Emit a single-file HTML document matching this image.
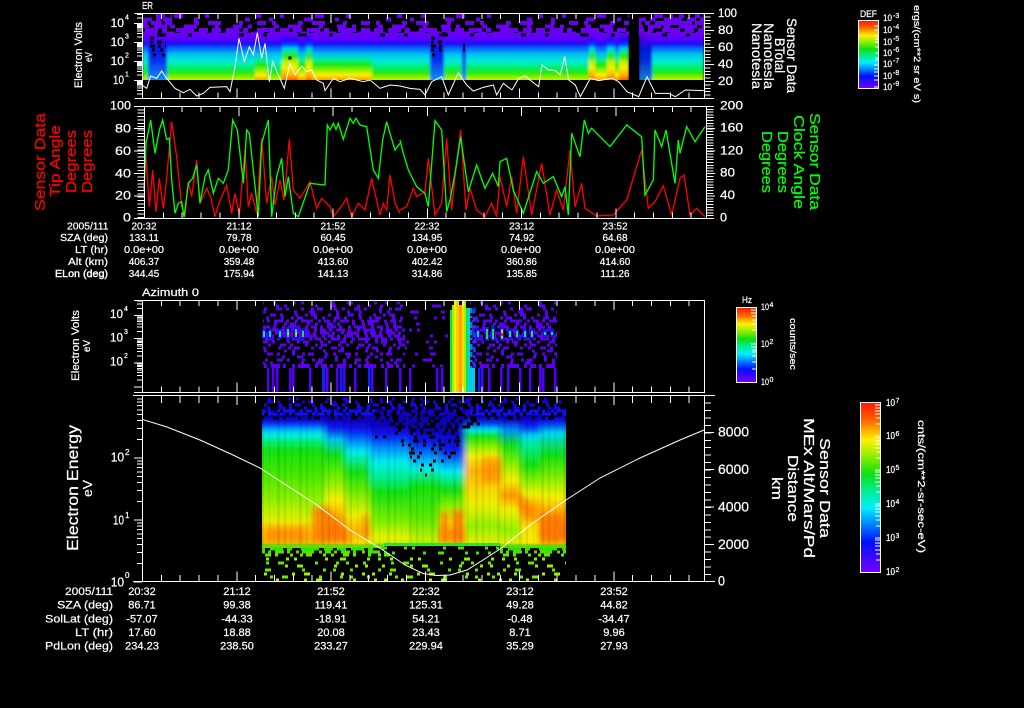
<!DOCTYPE html>
<html><head><meta charset="utf-8"><title>Sensor Data</title>
<style>
html,body{margin:0;padding:0;background:#000}
svg{display:block}
text{fill:#fff;font-family:"Liberation Sans",sans-serif;stroke:#fff;stroke-width:.22}
.s7{font-size:7px}.s9{font-size:9.5px}.s10{font-size:10px}.s11{font-size:11px}.s12{font-size:12px}.s13{font-size:13px}.s14{font-size:14px}.s15{font-size:15px}
.r text,text.r{fill:#f00;stroke:#f00}
.gr text{fill:#0f0;stroke:#0f0}
.m text{text-anchor:middle}
.e text,text.e{text-anchor:end}
.ax{stroke:#fff;fill:none;shape-rendering:crispEdges}
.sp{stroke-dasharray:4 31 9 22 4 47 5 19}
.md{stroke-dasharray:4 14 9 6 4 22 5 9 13 18}
.dn{stroke-dasharray:9 5 13 4 5 9 18 5 9 4}
.vd{stroke-dasharray:22 4 13 5 27 4 9 5}
.f0{stroke-dasharray:3 14 3 25 3 9 6 31 3 18 3 7}
.f1{stroke-dasharray:3 9 3 17 3 5 3 28 3 12 6 21 3 8}
.f2{stroke-dasharray:3 5 3 9 6 4 3 12 3 7 3 3 6 11}
.f3{stroke-dasharray:6 3 3 4 9 3 3 6 3 3 12 5 3 3}
.nz{fill:none;shape-rendering:crispEdges}
</style></head>
<body>
<svg width="1024" height="708" viewBox="0 0 1024 708" xmlns="http://www.w3.org/2000/svg">
<defs>
<filter id="b" x="-5%" y="-5%" width="110%" height="110%"><feGaussianBlur stdDeviation="1.2 .3"/></filter>
<filter id="b2" x="-5%" y="-5%" width="110%" height="110%"><feGaussianBlur stdDeviation="3 1.5"/></filter>
<filter id="b3" x="-30%" y="-30%" width="160%" height="160%"><feGaussianBlur stdDeviation="3"/></filter>
<clipPath id="c1"><rect x="142" y="14" width="562" height="66"/></clipPath>
<clipPath id="c4"><rect x="262" y="396" width="304" height="186"/></clipPath>
<clipPath id="ca"><rect x="130" y="13" width="14" height="86"/></clipPath>
<clipPath id="cc"><rect x="130" y="300" width="14" height="93"/></clipPath>

<linearGradient id="n1" gradientUnits="userSpaceOnUse" x1="0" y1="0" x2="0" y2="1000"><stop offset=".033" stop-color="#6a00ff"/><stop offset=".041" stop-color="#5000ff"/><stop offset=".044" stop-color="#0818f0"/><stop offset=".048" stop-color="#0860ff"/><stop offset=".054" stop-color="#00c0f0"/><stop offset=".062" stop-color="#00eed0"/><stop offset=".068" stop-color="#00ee60"/><stop offset=".073" stop-color="#30e810"/><stop offset=".078" stop-color="#a0f000"/><stop offset=".080" stop-color="#c8f000"/></linearGradient>
<linearGradient id="w1" gradientUnits="userSpaceOnUse" x1="0" y1="0" x2="0" y2="1000"><stop offset=".033" stop-color="#6a00ff"/><stop offset=".041" stop-color="#5000ff"/><stop offset=".044" stop-color="#0818f0"/><stop offset=".048" stop-color="#0860ff"/><stop offset=".054" stop-color="#00c0f0"/><stop offset=".060" stop-color="#00ee90"/><stop offset=".065" stop-color="#20e810"/><stop offset=".070" stop-color="#90f000"/><stop offset=".075" stop-color="#f4f000"/><stop offset=".080" stop-color="#ffa000"/></linearGradient>
<linearGradient id="h1" gradientUnits="userSpaceOnUse" x1="0" y1="0" x2="0" y2="1000"><stop offset=".033" stop-color="#6a00ff"/><stop offset=".040" stop-color="#3000ff"/><stop offset=".044" stop-color="#0040ff"/><stop offset=".048" stop-color="#00c0f0"/><stop offset=".052" stop-color="#00ee90"/><stop offset=".056" stop-color="#30e810"/><stop offset=".062" stop-color="#c0f000"/><stop offset=".068" stop-color="#f4f000"/><stop offset=".075" stop-color="#ffb000"/><stop offset=".080" stop-color="#ff6000"/></linearGradient>
<linearGradient id="d1" gradientUnits="userSpaceOnUse" x1="0" y1="0" x2="0" y2="1000"><stop offset=".033" stop-color="#6a00ff"/><stop offset=".042" stop-color="#4000ff"/><stop offset=".048" stop-color="#0818f0"/><stop offset=".060" stop-color="#0030f0"/><stop offset=".070" stop-color="#1060f0"/><stop offset=".080" stop-color="#1090f0"/></linearGradient>

<linearGradient id="A" gradientUnits="userSpaceOnUse" x1="0" y1="0" x2="0" y2="1000"><stop offset=".418" stop-color="#1000c0"/><stop offset=".423" stop-color="#0818f0"/><stop offset=".428" stop-color="#0090ff"/><stop offset=".434" stop-color="#00eeee"/><stop offset=".440" stop-color="#00ee90"/><stop offset=".450" stop-color="#10e010"/><stop offset=".472" stop-color="#40e800"/><stop offset=".500" stop-color="#90f000"/><stop offset=".520" stop-color="#e0f000"/><stop offset=".528" stop-color="#ffc000"/><stop offset=".540" stop-color="#ffb000"/><stop offset=".546" stop-color="#c0f000"/></linearGradient>
<linearGradient id="B" gradientUnits="userSpaceOnUse" x1="0" y1="0" x2="0" y2="1000"><stop offset=".420" stop-color="#1000c0"/><stop offset=".428" stop-color="#0818f0"/><stop offset=".440" stop-color="#00c8f0"/><stop offset=".455" stop-color="#10e010"/><stop offset=".480" stop-color="#80f000"/><stop offset=".500" stop-color="#f4f000"/><stop offset=".520" stop-color="#ff9800"/><stop offset=".535" stop-color="#ff7000"/><stop offset=".546" stop-color="#f4f000"/></linearGradient>
<linearGradient id="C" gradientUnits="userSpaceOnUse" x1="0" y1="0" x2="0" y2="1000"><stop offset=".420" stop-color="#1000c0"/><stop offset=".430" stop-color="#0818f0"/><stop offset=".442" stop-color="#0090ff"/><stop offset=".452" stop-color="#00eeee"/><stop offset=".472" stop-color="#10e010"/><stop offset=".492" stop-color="#70ec00"/><stop offset=".515" stop-color="#e8f000"/><stop offset=".532" stop-color="#ffb000"/><stop offset=".546" stop-color="#f4f000"/></linearGradient>
<linearGradient id="D" gradientUnits="userSpaceOnUse" x1="0" y1="0" x2="0" y2="1000"><stop offset=".425" stop-color="#1000c0"/><stop offset=".435" stop-color="#0818f0"/><stop offset=".448" stop-color="#0090ff"/><stop offset=".462" stop-color="#00eeee"/><stop offset=".478" stop-color="#00ee90"/><stop offset=".492" stop-color="#10e010"/><stop offset=".522" stop-color="#80f000"/><stop offset=".538" stop-color="#e8f000"/><stop offset=".546" stop-color="#c0f000"/></linearGradient>
<linearGradient id="E" gradientUnits="userSpaceOnUse" x1="0" y1="0" x2="0" y2="1000"><stop offset=".430" stop-color="#1000c0"/><stop offset=".442" stop-color="#0818f0"/><stop offset=".456" stop-color="#0090ff"/><stop offset=".468" stop-color="#00eeee"/><stop offset=".486" stop-color="#10e010"/><stop offset=".520" stop-color="#60ea00"/><stop offset=".540" stop-color="#c0f000"/><stop offset=".546" stop-color="#a0f000"/></linearGradient>
<linearGradient id="F" gradientUnits="userSpaceOnUse" x1="0" y1="0" x2="0" y2="1000"><stop offset=".430" stop-color="#1000c0"/><stop offset=".450" stop-color="#0818f0"/><stop offset=".462" stop-color="#0090ff"/><stop offset=".472" stop-color="#00eeee"/><stop offset=".490" stop-color="#10e010"/><stop offset=".506" stop-color="#90f000"/><stop offset=".522" stop-color="#f4f000"/><stop offset=".534" stop-color="#ff9000"/><stop offset=".546" stop-color="#f4d000"/></linearGradient>
<linearGradient id="G" gradientUnits="userSpaceOnUse" x1="0" y1="0" x2="0" y2="1000"><stop offset=".418" stop-color="#1000c0"/><stop offset=".424" stop-color="#0040f0"/><stop offset=".430" stop-color="#00eeee"/><stop offset=".436" stop-color="#10e010"/><stop offset=".447" stop-color="#90f000"/><stop offset=".456" stop-color="#f4f000"/><stop offset=".470" stop-color="#ffb000"/><stop offset=".490" stop-color="#f8d800"/><stop offset=".506" stop-color="#e8f000"/><stop offset=".526" stop-color="#90f000"/><stop offset=".546" stop-color="#f0f000"/></linearGradient>
<linearGradient id="H" gradientUnits="userSpaceOnUse" x1="0" y1="0" x2="0" y2="1000"><stop offset=".420" stop-color="#1000c0"/><stop offset=".430" stop-color="#0090ff"/><stop offset=".445" stop-color="#10e010"/><stop offset=".465" stop-color="#90f000"/><stop offset=".480" stop-color="#f4f000"/><stop offset=".495" stop-color="#ff9800"/><stop offset=".510" stop-color="#f4f000"/><stop offset=".530" stop-color="#90f000"/><stop offset=".546" stop-color="#f0f000"/></linearGradient>
<linearGradient id="I" gradientUnits="userSpaceOnUse" x1="0" y1="0" x2="0" y2="1000"><stop offset=".418" stop-color="#1000c0"/><stop offset=".426" stop-color="#0818f0"/><stop offset=".436" stop-color="#00d8f0"/><stop offset=".446" stop-color="#00ee90"/><stop offset=".465" stop-color="#10e010"/><stop offset=".482" stop-color="#90f000"/><stop offset=".495" stop-color="#f4f000"/><stop offset=".508" stop-color="#ff9800"/><stop offset=".526" stop-color="#f8e000"/><stop offset=".546" stop-color="#f4f000"/></linearGradient>
<linearGradient id="J" gradientUnits="userSpaceOnUse" x1="0" y1="0" x2="0" y2="1000"><stop offset=".416" stop-color="#1000c0"/><stop offset=".422" stop-color="#0818f0"/><stop offset=".433" stop-color="#00d8f0"/><stop offset=".455" stop-color="#10e010"/><stop offset=".480" stop-color="#90f000"/><stop offset=".497" stop-color="#f4f000"/><stop offset=".515" stop-color="#ff9800"/><stop offset=".535" stop-color="#ff7000"/><stop offset=".546" stop-color="#f4f000"/></linearGradient>

<linearGradient id="cb" x1="0" y1="0" x2="0" y2="1"><stop offset="0" stop-color="#ff1800"/><stop offset=".1" stop-color="#ff6000"/><stop offset=".22" stop-color="#fff000"/><stop offset=".3" stop-color="#a0f000"/><stop offset=".42" stop-color="#10e010"/><stop offset=".52" stop-color="#00ee90"/><stop offset=".62" stop-color="#00eeff"/><stop offset=".72" stop-color="#0080ff"/><stop offset=".82" stop-color="#0010ff"/><stop offset="1" stop-color="#7800ff"/></linearGradient>

<path id="ld" vector-effect="non-scaling-stroke" d="M134 0H142M137 -30.1H142M137 -47.7H142M137 -60.2H142M137 -69.9H142M137 -77.8H142M137 -84.5H142M137 -90.3H142M137 -95.4H142"/>
</defs>

<rect width="1024" height="708" fill="#000"/>

<!-- PANEL 1 spectrogram -->
<g clip-path="url(#c1)">
<g filter="url(#b)">
<rect x="142" y="33" width="6" height="47" fill="url(#n1)"/>
<rect x="148" y="33" width="19" height="47" fill="url(#d1)"/>
<rect x="167" y="33" width="66" height="47" fill="url(#n1)"/>
<rect x="233" y="33" width="22" height="47" fill="url(#n1)"/>
<rect x="255" y="33" width="4" height="47" fill="url(#w1)"/>
<rect x="259" y="33" width="8" height="47" fill="url(#w1)"/>
<rect x="267" y="33" width="15" height="47" fill="url(#n1)"/>
<rect x="282" y="33" width="16" height="47" fill="url(#h1)"/>
<rect x="298" y="33" width="8" height="47" fill="url(#w1)"/>
<rect x="306" y="33" width="6" height="47" fill="url(#h1)"/>
<rect x="312" y="33" width="60" height="47" fill="url(#w1)"/>
<rect x="372" y="33" width="58" height="47" fill="url(#n1)"/>
<rect x="430" y="33" width="14" height="47" fill="url(#d1)"/>
<rect x="444" y="33" width="18" height="47" fill="url(#n1)"/>
<rect x="462" y="33" width="4" height="47" fill="url(#d1)"/>
<rect x="466" y="33" width="123" height="47" fill="url(#n1)"/>
<rect x="589" y="33" width="6" height="47" fill="url(#h1)"/>
<rect x="595" y="33" width="12" height="47" fill="url(#w1)"/>
<rect x="607" y="33" width="8" height="47" fill="url(#h1)"/>
<rect x="615" y="33" width="4" height="47" fill="url(#w1)"/>
<rect x="619" y="33" width="10" height="47" fill="url(#h1)"/>
<rect x="639" y="33" width="13" height="47" fill="url(#d1)" opacity=".9"/>
<rect x="652" y="33" width="52" height="47" fill="url(#n1)"/>
</g>
<g class="nz" stroke="#6a00f0" stroke-width="3.6">
<path class="sp" d="M142 16H704" stroke-dashoffset="3"/>
<path class="sp" d="M142 19.5H704" stroke-dashoffset="14"/>
<path class="md" d="M142 23H704" stroke-dashoffset="7"/>
<path class="md" d="M142 26.5H704" stroke-dashoffset="31"/>
<path class="dn" d="M142 30H704" stroke-dashoffset="11"/>
<path class="vd" d="M142 33.5H704" stroke-dashoffset="6"/>
<path class="md" d="M142 16H172M640 16H704" stroke-dashoffset="4"/>
<path class="dn" d="M142 19.5H172M636 19.5H704" stroke-dashoffset="17"/>
<path class="dn" d="M142 23H172M636 23H704" stroke-dashoffset="22"/>
<path class="dn" d="M142 26.5H172M636 26.5H704" stroke-dashoffset="2"/>
</g>
<g class="nz" stroke="#000" stroke-width="3.4">
<path class="sp" d="M142 35H704" stroke-dashoffset="20"/>
<path class="sp" d="M150 38H166M431 38H442" stroke-dasharray="4 3 3 4"/>
<path d="M150 42H166M431 42H442" stroke-dasharray="3 4 5 3"/>
<path d="M150 46H166M431 46H442M463 46H465" stroke-dasharray="5 3 3 4"/>
<path d="M152 50H166M431 50H442M463 50H465" stroke-dasharray="3 5 3 3"/>
<path d="M153 55H165M432 55H440" stroke-dasharray="3 6 3 3"/>
</g>
<rect x="288.5" y="56.5" width="3" height="3" fill="#000"/>
<rect x="629" y="14" width="10" height="67" fill="#000"/>
</g>

<!-- PANEL 1 line -->
<polyline transform="scale(.33333)" fill="none" stroke="#fff" stroke-width="3" points="426,255 440,265 452,228 470,235 485,213 500,235 525,265 550,278 570,268 590,288 610,280 630,262 680,260 690,275 705,200 717,115 733,185 748,140 760,165 772,98 785,175 795,130 808,245 818,185 835,225 853,265 870,190 885,225 905,198 920,215 935,210 950,240 970,250 975,272 1000,235 1020,245 1050,235 1090,245 1110,240 1140,265 1170,255 1200,258 1230,265 1260,268 1275,285 1295,245 1325,230 1345,285 1375,218 1400,255 1420,273 1450,262 1480,255 1490,285 1510,250 1536,270"/>
<polyline transform="translate(512,0) scale(.33333)" fill="none" stroke="#fff" stroke-width="3" points="0,270 20,235 40,228 60,245 80,260 90,195 110,210 130,212 145,225 158,170 170,240 190,255 205,290 235,235 260,242 300,235 320,245 345,275 380,290 405,230 430,280 470,280 490,290 520,270 575,272"/>

<!-- PANEL 1 axes -->
<g class="ax" stroke-width="1">
<path d="M134.5 13.5H714M134.5 98.5H714M142.5 13V99M704.5 13V99"/>
<path d="M142 16H705" stroke-width="6" stroke-dasharray="1 17.85"/>
<path d="M142 95.5H705" stroke-width="6" stroke-dasharray="1 17.85"/>
<path d="M142 18H705" stroke-width="10" stroke-dasharray="1 93.25"/>
<path d="M142 93.5H705" stroke-width="10" stroke-dasharray="1 93.25"/>
<g clip-path="url(#ca)">
<use href="#ld" transform="translate(0,80.5) scale(1,.19)"/>
<use href="#ld" transform="translate(0,61.5) scale(1,.19)"/>
<use href="#ld" transform="translate(0,42.5) scale(1,.19)"/>
<use href="#ld" transform="translate(0,23.5) scale(1,.19)"/>
<use href="#ld" transform="translate(0,99.5) scale(1,.19)"/>
</g>
<path d="M707.5 13V98" stroke-width="6" stroke-dasharray="1 2.4"/>
<path d="M704 30.5H714M704 47.5H714M704 64.5H714M704 81.5H714"/>
</g>
<text x="142" y="9" class="s10" textLength="11" lengthAdjust="spacingAndGlyphs">ER</text>
<g class="s12">
<text x="110.500" y="27" textLength="13.500" lengthAdjust="spacingAndGlyphs">10</text><text x="125" y="19.500" class="s7">4</text>
<text x="110.500" y="46" textLength="13.500" lengthAdjust="spacingAndGlyphs">10</text><text x="125" y="38.500" class="s7">3</text>
<text x="110.500" y="65" textLength="13.500" lengthAdjust="spacingAndGlyphs">10</text><text x="125" y="57.500" class="s7">2</text>
<text x="113" y="84" textLength="11" lengthAdjust="spacingAndGlyphs">10</text><text x="125" y="76.500" class="s7">1</text>
<text x="718" y="17" textLength="19" lengthAdjust="spacingAndGlyphs">100</text>
<text x="718" y="34" textLength="15" lengthAdjust="spacingAndGlyphs">80</text>
<text x="718" y="51" textLength="15" lengthAdjust="spacingAndGlyphs">60</text>
<text x="718" y="68" textLength="15" lengthAdjust="spacingAndGlyphs">40</text>
<text x="718" y="85" textLength="15" lengthAdjust="spacingAndGlyphs">20</text>
</g>
<text transform="translate(82,88) rotate(-90)" class="s11" textLength="66" lengthAdjust="spacingAndGlyphs">Electron Volts</text>
<text transform="translate(92,62) rotate(-90)" class="s10" textLength="10" lengthAdjust="spacingAndGlyphs">eV</text>
<text transform="translate(787,18) rotate(90)" class="s14" textLength="75" lengthAdjust="spacingAndGlyphs">Sensor Data</text>
<text transform="translate(775,38) rotate(90)" class="s14" textLength="35" lengthAdjust="spacingAndGlyphs">BTotal</text>
<text transform="translate(764,23) rotate(90)" class="s14" textLength="66" lengthAdjust="spacingAndGlyphs">Nanotesla</text>
<text transform="translate(752,23) rotate(90)" class="s14" textLength="66" lengthAdjust="spacingAndGlyphs">Nanotesla</text>

<!-- Colorbar top -->
<rect x="858.500" y="20.500" width="20" height="68" fill="url(#cb)" stroke="#fff"/>
<path class="ax" d="M874 26H878M874 30H878M875 42H878M875 53H878M875 42.500H878M875 47H878M874 65H878M874 69H878M874 72H878M874 76H878M874 80H878M874 87H878M875 36H878M875 39H878M875 58H878M875 60H878" stroke-width="1"/>
<text x="860" y="17" class="s9" textLength="17" lengthAdjust="spacingAndGlyphs">DEF</text>
<g class="s9">
<text x="883" y="21" textLength="9" lengthAdjust="spacingAndGlyphs">10</text><text x="893" y="18" class="s7">-3</text>
<text x="883" y="33" textLength="9" lengthAdjust="spacingAndGlyphs">10</text><text x="893" y="29" class="s7">-4</text>
<text x="883" y="45" textLength="9" lengthAdjust="spacingAndGlyphs">10</text><text x="893" y="41" class="s7">-5</text>
<text x="883" y="56" textLength="9" lengthAdjust="spacingAndGlyphs">10</text><text x="893" y="52" class="s7">-6</text>
<text x="883" y="67" textLength="9" lengthAdjust="spacingAndGlyphs">10</text><text x="893" y="63" class="s7">-7</text>
<text x="883" y="79" textLength="9" lengthAdjust="spacingAndGlyphs">10</text><text x="893" y="75" class="s7">-8</text>
<text x="883" y="90" textLength="9" lengthAdjust="spacingAndGlyphs">10</text><text x="893" y="86" class="s7">-9</text>
</g>
<text transform="translate(914,5) rotate(90)" class="s9" textLength="98" lengthAdjust="spacingAndGlyphs">ergs/(cm**2 sr eV s)</text>

<!-- PANEL 2 -->
<polyline transform="translate(0,100) scale(.33333)" fill="none" stroke="#f00" stroke-width="4" points="432,90 448,320 458,210 468,335 478,235 490,325 500,235 515,65 530,170 545,320 555,350 565,245 575,290 590,180 600,310 620,265 632,290 645,350 655,315 680,255 695,340 705,280 718,345 735,150 745,320 755,280 770,340 785,115 800,310 815,230 825,315 840,240 852,300 868,118 880,270 900,295 930,245 950,325 965,295 990,320 1000,350 1020,325 1040,295 1055,350 1075,310 1095,330 1115,235 1130,300 1140,345 1150,310 1160,330 1170,225 1185,310 1200,340"/>
<polyline transform="translate(400,100) scale(.33333)" fill="none" stroke="#f00" stroke-width="4" points="0,330 20,320 40,265 50,290 75,275 85,175 105,345 125,310 140,115 155,330 165,230 182,90 198,330 210,265 230,330 255,350 275,310 290,350 300,230 320,320 335,230 350,340 370,170 395,345 425,190 450,345 470,270 490,330 510,150 525,320 545,250 555,325 590,348 640,345 680,300 725,150 745,325 765,305 790,258 815,345 840,235 852,225 870,345 890,325 915,350"/>
<polyline transform="translate(0,100) scale(.33333)" fill="none" stroke="#0f0" stroke-width="4" points="432,270 438,130 452,60 465,160 478,90 488,60 500,118 508,115 515,240 525,340 535,310 545,305 552,352 565,250 578,235 590,195 600,310 615,230 625,210 640,280 655,235 670,250 685,210 698,60 712,90 730,250 740,90 748,100 775,350 785,130 805,60 815,350 830,230 845,175 855,290 865,230 880,340 895,350 930,250 975,255 982,75 990,90 1000,70 1008,88 1015,70 1030,118 1050,55 1060,70 1068,55 1080,75 1100,80 1120,210 1135,235 1148,120 1160,65 1170,100 1185,150 1200,130"/>
<polyline transform="translate(400,100) scale(.33333)" fill="none" stroke="#0f0" stroke-width="4" points="0,120 10,160 25,210 50,260 75,280 85,320 105,62 125,90 140,335 150,300 165,220 182,110 205,275 230,195 255,265 278,220 295,260 300,185 320,175 340,270 370,340 410,215 430,250 460,230 485,290 495,260 505,345 515,100 540,170 553,60 565,100 575,85 630,140 680,75 725,110 735,285 760,240 765,90 785,140 798,90 825,250 835,120 840,160 860,80 885,125 915,80"/>
<g class="ax" stroke-width="1">
<path d="M134 106.500H714M134 218.500H714M144.500 106V219M706.500 106V219"/>
<path d="M144 109H707" stroke-width="6" stroke-dasharray="1 17.85"/>
<path d="M144 215.500H707" stroke-width="6" stroke-dasharray="1 17.85"/>
<path d="M144 111H707" stroke-width="10" stroke-dasharray="1 93.25"/>
<path d="M144 213.500H707" stroke-width="10" stroke-dasharray="1 93.25"/>
<path d="M141 106V219" stroke-width="7" stroke-dasharray="1 2.36"/>
<path d="M710 106V219" stroke-width="7" stroke-dasharray="1 1.8"/>
<path d="M134 128.500H144M134 151H144M134 173.500H144M134 196H144"/>
<path d="M707 128.500H715M707 151H715M707 173.500H715M707 196H715"/>
</g>
<g class="s12">
<text x="110" y="109.500" textLength="21" lengthAdjust="spacingAndGlyphs">100</text>
<text x="115" y="132.500" textLength="16" lengthAdjust="spacingAndGlyphs">80</text>
<text x="115" y="155" textLength="16" lengthAdjust="spacingAndGlyphs">60</text>
<text x="115" y="177.500" textLength="16" lengthAdjust="spacingAndGlyphs">40</text>
<text x="115" y="199.500" textLength="16" lengthAdjust="spacingAndGlyphs">20</text>
<text x="123" y="221.500" textLength="8" lengthAdjust="spacingAndGlyphs">0</text>
<text x="720" y="109.500" textLength="23" lengthAdjust="spacingAndGlyphs">200</text>
<text x="720" y="131.700" textLength="23" lengthAdjust="spacingAndGlyphs">160</text>
<text x="720" y="154.300" textLength="23" lengthAdjust="spacingAndGlyphs">120</text>
<text x="720" y="176.700" textLength="15" lengthAdjust="spacingAndGlyphs">80</text>
<text x="720" y="199" textLength="15" lengthAdjust="spacingAndGlyphs">40</text>
<text x="720" y="221.500" textLength="7" lengthAdjust="spacingAndGlyphs">0</text>
</g>
<g class="r s15">
<text transform="translate(45,211) rotate(-90)" textLength="98" lengthAdjust="spacingAndGlyphs">Sensor Data</text>
<text transform="translate(60,197) rotate(-90)" textLength="72" lengthAdjust="spacingAndGlyphs">Tip Angle</text>
<text transform="translate(76,193) rotate(-90)" textLength="63" lengthAdjust="spacingAndGlyphs">Degrees</text>
<text transform="translate(92,193) rotate(-90)" textLength="63" lengthAdjust="spacingAndGlyphs">Degrees</text>
</g>
<g class="gr s15">
<text transform="translate(810,113) rotate(90)" textLength="97" lengthAdjust="spacingAndGlyphs">Sensor Data</text>
<text transform="translate(794,115) rotate(90)" textLength="94" lengthAdjust="spacingAndGlyphs">Clock Angle</text>
<text transform="translate(778,131) rotate(90)" textLength="62" lengthAdjust="spacingAndGlyphs">Degrees</text>
<text transform="translate(762,131) rotate(90)" textLength="62" lengthAdjust="spacingAndGlyphs">Degrees</text>
</g>
<!-- rows under panel 2 -->
<g class="s10">
<text x="67" y="229.300" textLength="41.500" lengthAdjust="spacingAndGlyphs">2005/111</text>
<text x="60" y="241" textLength="48" lengthAdjust="spacingAndGlyphs">SZA (deg)</text>
<text x="75" y="253" textLength="33" lengthAdjust="spacingAndGlyphs">LT (hr)</text>
<text x="68" y="265" textLength="40" lengthAdjust="spacingAndGlyphs">Alt (km)</text>
<text x="55" y="277" textLength="53" lengthAdjust="spacingAndGlyphs" style="stroke-width:.4">ELon (deg)</text>
</g>
<g class="s10 m">
<text x="144" y="229.300">20:32</text><text x="239" y="229.300">21:12</text><text x="333" y="229.300">21:52</text><text x="427" y="229.300">22:32</text><text x="521.700" y="229.300">23:12</text><text x="615" y="229.300">23:52</text>
<text x="144" y="241">133.11</text><text x="239" y="241">79.78</text><text x="333" y="241">60.45</text><text x="427" y="241">134.95</text><text x="521.700" y="241">74.92</text><text x="615" y="241">64.68</text>
<text x="144" y="265">406.37</text><text x="239" y="265">359.48</text><text x="333" y="265">413.60</text><text x="427" y="265">402.42</text><text x="521.700" y="265">360.86</text><text x="615" y="265">414.60</text>
<text x="144" y="277">344.45</text><text x="239" y="277">175.94</text><text x="333" y="277">141.13</text><text x="427" y="277">314.86</text><text x="521.700" y="277">135.85</text><text x="615" y="277">111.26</text>
</g>
<g class="s10">
<text x="124" y="253" textLength="40" lengthAdjust="spacingAndGlyphs">0.0e+00</text><text x="219" y="253" textLength="40" lengthAdjust="spacingAndGlyphs">0.0e+00</text><text x="313" y="253" textLength="40" lengthAdjust="spacingAndGlyphs">0.0e+00</text><text x="407" y="253" textLength="40" lengthAdjust="spacingAndGlyphs">0.0e+00</text><text x="501" y="253" textLength="40" lengthAdjust="spacingAndGlyphs">0.0e+00</text><text x="595" y="253" textLength="40" lengthAdjust="spacingAndGlyphs">0.0e+00</text>
</g>

<!-- PANEL 3 -->
<text x="142" y="296" class="s11" textLength="57" lengthAdjust="spacingAndGlyphs">Azimuth 0</text>
<g class="nz" stroke="#5a00f0" stroke-width="3">
<path class="f1" d="M263 303H405M470 303H557" stroke-dashoffset="2"/>
<path class="f1" d="M263 306H405M472 306H557" stroke-dashoffset="19"/>
<path class="f2" d="M263 309H405M472 309H557" stroke-dashoffset="7"/>
<path class="f1" d="M263 312H405M472 312H557" stroke-dashoffset="40"/>
<path class="f2" d="M263 315H405M472 315H557" stroke-dashoffset="13"/>
<path class="f2" d="M263 318H405M472 318H557" stroke-dashoffset="27"/>
<path class="f3" d="M263 321H405M472 321H557" stroke-dashoffset="5"/>
<path class="f2" d="M263 324H405M472 324H557" stroke-dashoffset="34"/>
<path class="f3" d="M263 327H405M472 327H557" stroke-dashoffset="18"/>
<path class="f3" d="M263 330H405M472 330H557" stroke-dashoffset="9"/>
<path class="f3" d="M263 333H405M472 333H557" stroke-dashoffset="25"/>
<path class="f3" d="M263 336H405M472 336H557" stroke-dashoffset="1"/>
<path class="f3" d="M263 339H405M472 339H557" stroke-dashoffset="14"/>
<path class="f2" d="M263 342H405M472 342H557" stroke-dashoffset="21"/>
<path class="f2" d="M263 345H405M472 345H557" stroke-dashoffset="3"/>
<path class="f2" d="M263 348H405M472 348H557" stroke-dashoffset="30"/>
<path class="f1" d="M263 351H405M472 351H557" stroke-dashoffset="11"/>
<path class="f2" d="M263 354H405M472 354H557" stroke-dashoffset="16"/>
<path class="f1" d="M263 357H405M472 357H557" stroke-dashoffset="52"/>
<path class="f2" d="M263 360H405M472 360H557" stroke-dashoffset="6"/>
<path class="f1" d="M263 363H405M472 363H557" stroke-dashoffset="33"/>
<path class="f3" d="M263 366H405M472 366H557" stroke-dashoffset="8" stroke-width="4"/>
<path class="sp" d="M405 306H448" stroke-dashoffset="8"/>
<path class="sp" d="M405 312H448" stroke-dashoffset="30"/>
<path class="f1" d="M405 318H448" stroke-dashoffset="3"/>
<path class="sp" d="M405 324H448" stroke-dashoffset="55"/>
<path class="f1" d="M405 330H448" stroke-dashoffset="28"/>
<path class="f1" d="M405 336H448" stroke-dashoffset="46"/>
<path class="f1" d="M405 342H448" stroke-dashoffset="11"/>
<path class="sp" d="M405 348H448" stroke-dashoffset="42"/>
<path class="f1" d="M405 354H448" stroke-dashoffset="61"/>
<path class="sp" d="M405 360H448" stroke-dashoffset="17"/>
<path class="f1" d="M405 366H448" stroke-dashoffset="5"/>
</g>
<g stroke="#5000f8" fill="none" shape-rendering="crispEdges" stroke-width="2.500">
<path d="M268 368V392M273 368V392M277 368V392M290 368V392M293 368V392M310 368V392M324 368V392M327 368V392M337 368V392M341 368V392M344 368V392M355 368V392M369 368V392M372 368V392M386 368V392M400 368V392M410 368V392M437 368V392M442 368V392M479 368V392M482 368V392M489 368V392M501 368V392M508 368V392M520 368V392M530 368V392M540 368V392M543 368V392M555 368V392"/>
<path stroke="#0028ff" d="M323 368V392M341 368V392M369 368V392M479 368V392"/>
</g>
<!-- spots -->
<g shape-rendering="crispEdges">
<path fill="none" stroke="#2010f0" stroke-width="4" d="M264 329V339M270 329V339M280 329V339M288 327V339M296 327V339M303 329V339M478 329V339M487 327V341M493 327V341M502 327V341M510 329V339M517 329V339M525 329V339M532 329V339M545 329V337M552 329V337"/>
<path fill="none" stroke="#00e0c0" stroke-width="2" d="M264 331V337M270 331V337M280 331V337M288 329V337M296 329V337M303 331V337M478 331V337M487 329V339M493 329V339M502 329V339M510 331V337M517 331V337M525 331V337M532 331V337M545 332V335M552 332V335"/>
<path fill="none" stroke="#20e020" stroke-width="2" d="M288 331V336M296 331V336M303 332V336M487 331V337M493 331V337M510 332V335M517 332V335"/>
<path fill="none" stroke="#f0d000" stroke-width="1.500" d="M288 332V335M296 332V335M502 330V338"/>
<rect x="501" y="333" width="2" height="3" fill="#ff2000"/>
<!-- hot column -->
<rect x="450" y="310" width="2" height="82" fill="#10e040"/>
<rect x="452" y="305" width="2" height="87" fill="#a0f000"/>
<rect x="454" y="301" width="2" height="91" fill="#f0f000"/>
<rect x="456" y="301" width="3" height="91" fill="#ffc800"/>
<rect x="459" y="305" width="3" height="87" fill="#ffa000"/>
<rect x="462" y="301" width="2" height="91" fill="#f0e000"/>
<rect x="464" y="301" width="2" height="91" fill="#a0f000"/>
<rect x="466" y="308" width="1.500" height="84" fill="#10e040"/>
<rect x="467.500" y="308" width="2.500" height="84" fill="#00d8e0"/>
<rect x="470" y="368" width="5" height="24" fill="#00c8f0"/>
<path fill="none" stroke="#0080f0" stroke-width="2.500" stroke-dasharray="5 3 2 4 6 2" d="M471 308V368"/>
<path fill="none" stroke="#0048ff" stroke-width="2.500" stroke-dasharray="3 4 5 3" d="M474 310V366"/>
</g>
<g class="ax" stroke-width="1">
<path d="M134 300.500H705M134 392.500H705M142.500 300V393M704.500 300V393"/>
<path d="M142 303H705" stroke-width="6" stroke-dasharray="1 17.85"/>
<path d="M142 389.500H705" stroke-width="6" stroke-dasharray="1 17.85"/>
<path d="M142 305H705" stroke-width="10" stroke-dasharray="1 93.25"/>
<path d="M142 387.500H705" stroke-width="10" stroke-dasharray="1 93.25"/>
<g clip-path="url(#cc)">
<use href="#ld" transform="translate(0,315.500) scale(1,.24)"/>
<use href="#ld" transform="translate(0,338.500) scale(1,.24)"/>
<use href="#ld" transform="translate(0,363) scale(1,.24)"/>
<use href="#ld" transform="translate(0,387) scale(1,.24)"/>
</g>
</g>
<g class="s12">
<text x="110" y="318" textLength="13" lengthAdjust="spacingAndGlyphs">10</text><text x="124" y="311" class="s7">4</text>
<text x="110" y="341.700" textLength="13" lengthAdjust="spacingAndGlyphs">10</text><text x="124" y="334" class="s7">3</text>
<text x="110" y="365.700" textLength="13" lengthAdjust="spacingAndGlyphs">10</text><text x="124" y="358" class="s7">2</text>
</g>
<text transform="translate(79,381) rotate(-90)" class="s11" textLength="71" lengthAdjust="spacingAndGlyphs">Electron Volts</text>
<text transform="translate(90,352) rotate(-90)" class="s10" textLength="12" lengthAdjust="spacingAndGlyphs">eV</text>

<!-- Hz bar -->
<rect x="736.500" y="307.500" width="20" height="75" fill="url(#cb)" stroke="#fff"/>
<path class="ax" d="M751 310H756M751 313H756M752 316H756M752 320H756M752 324H756M752 330H756M751 344H756M751 347H756M752 350H756M752 352H756M752 356H756M752 362H756M752 369H756" stroke-width="1"/>
<text x="742" y="303" class="s9" textLength="10" lengthAdjust="spacingAndGlyphs">Hz</text>
<g class="s9">
<text x="761" y="310" textLength="8" lengthAdjust="spacingAndGlyphs">10</text><text x="769.500" y="307" class="s7">4</text>
<text x="761" y="347" textLength="8" lengthAdjust="spacingAndGlyphs">10</text><text x="769.500" y="344" class="s7">2</text>
<text x="761" y="385" textLength="8" lengthAdjust="spacingAndGlyphs">10</text><text x="769.500" y="382" class="s7">0</text>
</g>
<text transform="translate(790,318) rotate(90)" class="s9" textLength="52" lengthAdjust="spacingAndGlyphs">counts/sec</text>

<!-- PANEL 4 spectrogram -->
<g clip-path="url(#c4)">
<g filter="url(#b2)">
<rect x="255" y="410" width="70" height="136" fill="url(#A)"/>
<rect x="325" y="410" width="20" height="136" fill="url(#B)"/>
<rect x="345" y="410" width="25" height="136" fill="url(#C)"/>
<rect x="370" y="410" width="40" height="136" fill="url(#D)"/>
<rect x="410" y="410" width="30" height="136" fill="url(#E)"/>
<rect x="440" y="410" width="25" height="136" fill="url(#F)"/>
<rect x="465" y="410" width="35" height="136" fill="url(#G)"/>
<rect x="500" y="410" width="20" height="136" fill="url(#H)"/>
<rect x="520" y="410" width="20" height="136" fill="url(#I)"/>
<rect x="540" y="410" width="30" height="136" fill="url(#J)"/>
</g>
<g filter="url(#b3)" fill="#ff7800">
<path d="M313 507H327L353 542H313Z" opacity=".85"/>
<rect x="363" y="515" width="5" height="24" opacity=".8"/>
<rect x="441" y="512" width="7" height="30" opacity=".9"/>
<rect x="453" y="510" width="10" height="32" opacity=".95"/>
<rect x="266" y="528" width="40" height="14" opacity=".55"/>
<path d="M513 492L525 497L540 520H525Z" opacity=".6"/>
<rect x="540" y="515" width="24" height="28" opacity=".8"/>
<rect x="482" y="457" width="20" height="26" opacity=".5"/>
</g>
<path fill="none" stroke="#000" stroke-opacity=".08" stroke-width="130" stroke-dasharray="2 5 1 7 3 4" d="M262 480H566"/>
<g class="nz" stroke="#000" stroke-width="3">
<path class="f3" d="M262 412H566" stroke-dashoffset="4"/>
<path class="f3" d="M262 415H566" stroke-dashoffset="19"/>
<path class="f2" d="M262 418H566" stroke-dashoffset="9"/>
<path class="f2" d="M375 421H480" stroke-dashoffset="2"/>
<path class="f2" d="M390 424H480" stroke-dashoffset="21"/>
<path class="f3" d="M392 427H470" stroke-dashoffset="12"/>
<path class="f2" d="M395 430H462" stroke-dashoffset="5"/>
<path class="f2" d="M395 433H462" stroke-dashoffset="30"/>
<path class="f1" d="M360 437H462" stroke-dashoffset="17"/>
<path class="f2" d="M400 441H462" stroke-dashoffset="7"/>
<path class="f2" d="M402 445H462" stroke-dashoffset="24"/>
<path class="f1" d="M402 449H460" stroke-dashoffset="3"/>
<path class="f2" d="M404 453H458" stroke-dashoffset="15"/>
<path class="f1" d="M410 457H458" stroke-dashoffset="33"/>
<path class="f1" d="M410 461H458" stroke-dashoffset="9"/>
<path class="f1" d="M415 465H455" stroke-dashoffset="26"/>
<path class="f1" d="M420 470H446" stroke-dashoffset="1"/>
<path class="f1" d="M425 475H440" stroke-dashoffset="13"/>
</g>
<g class="nz" stroke-width="3">
<path class="f1" stroke="#1800d0" d="M262 399H566" stroke-dashoffset="6"/>
<path class="f2" stroke="#1800d0" d="M262 402H566" stroke-dashoffset="15"/>
<path class="f2" stroke="#1408e0" d="M262 405H566" stroke-dashoffset="28"/>
<path class="f2" stroke="#2000f0" d="M262 408H566" stroke-dashoffset="3"/>
<path class="f3" stroke="#1010e8" d="M262 411H375M470 411H566" stroke-dashoffset="22"/>
<path class="f3" stroke="#1010f0" d="M262 414H375M470 414H566" stroke-dashoffset="10"/>
<path class="f2" stroke="#1800d0" d="M375 411H470" stroke-dashoffset="8"/>
<path class="f2" stroke="#1800d0" d="M375 414H470" stroke-dashoffset="33"/>
</g>
<!-- bottom band -->
<rect x="262" y="546" width="304" height="6" fill="#000"/>
<rect x="262" y="545" width="122" height="3" fill="#50e800"/>
<rect x="384" y="543" width="116" height="3" fill="#30e030"/>
<rect x="500" y="545" width="66" height="3" fill="#40e800"/>
<g class="nz" stroke-width="3">
<path class="dn" stroke="#30e000" d="M262 549H384M500 549H566" stroke-dashoffset="6"/>
<path class="f3" stroke="#50e000" d="M262 552H384M500 552H566" stroke-dashoffset="3"/>
<path class="f1" stroke="#50e000" d="M384 548H500" stroke-dashoffset="12"/>
<path class="f2" stroke="#60e800" d="M262 555H390M500 555H566" stroke-dashoffset="17"/>
<path class="f1" stroke="#50e000" d="M384 553H500" stroke-dashoffset="32"/>
<path class="f1" stroke="#90f000" d="M262 559H566" stroke-dashoffset="8"/>
<path class="f0" stroke="#60e800" d="M262 563H566" stroke-dashoffset="41"/>
<path class="f0" stroke="#90f000" d="M262 566H566" stroke-dashoffset="22"/>
<path class="f0" stroke="#60e800" d="M262 570H566" stroke-dashoffset="54"/>
<path class="f0" stroke="#a0f000" d="M262 574H566" stroke-dashoffset="15"/>
<path class="f0" stroke="#70ec00" d="M262 577H566" stroke-dashoffset="37"/>
<path class="f0" stroke="#b0f000" d="M262 580H566" stroke-dashoffset="3"/>
</g>
</g>
<!-- curve -->
<polyline fill="none" stroke="#fff" stroke-width="1" points="142,419.300 167,427 200,440 233,455 260,468 283,483 317,505 350,530 383,550 405,565 423,573.500 436,575.500 450,575 467,570 483,560 500,549 533,523 566,500 600,478 640,458 680,440 704,430"/>
<g class="ax" stroke-width="1">
<path d="M133 395.500H715M133 581.500H715M142.500 395V582M704.500 395V582"/>
<path d="M142 399H705" stroke-width="8" stroke-dasharray="1 17.85"/>
<path d="M142 578H705" stroke-width="6" stroke-dasharray="1 17.85"/>
<path d="M142 400H705" stroke-width="10" stroke-dasharray="1 93.25"/>
<path d="M142 576.500H705" stroke-width="10" stroke-dasharray="1 93.25"/>
<use href="#ld" transform="translate(0,458) scale(1,.62)"/>
<use href="#ld" transform="translate(0,520) scale(1,.62)"/>
<use href="#ld" transform="translate(0,582) scale(1,.62)"/>
<path d="M708 395V582" stroke-width="6" stroke-dasharray="1 6.46"/>
<path d="M704 432.500H714M704 469.500H714M704 507H714M704 544.500H714"/>
</g>
<g class="s13">
<text x="110.700" y="461.700" textLength="13.500" lengthAdjust="spacingAndGlyphs">10</text><text x="125" y="455" class="s7" style="font-size:8px">2</text>
<text x="113" y="524.300" textLength="11" lengthAdjust="spacingAndGlyphs">10</text><text x="125" y="518" class="s7" style="font-size:8px">1</text>
<text x="110.700" y="586.700" textLength="13.500" lengthAdjust="spacingAndGlyphs">10</text><text x="125" y="578" class="s7" style="font-size:8px">0</text>
</g>
<g class="s14">
<text x="718" y="436.700" textLength="31" lengthAdjust="spacingAndGlyphs">8000</text>
<text x="718" y="474" textLength="31" lengthAdjust="spacingAndGlyphs">6000</text>
<text x="718" y="511.700" textLength="31" lengthAdjust="spacingAndGlyphs">4000</text>
<text x="718" y="549" textLength="31" lengthAdjust="spacingAndGlyphs">2000</text>
<text x="718" y="585.500" textLength="7" lengthAdjust="spacingAndGlyphs">0</text>
</g>
<text transform="translate(78,551) rotate(-90)" class="s15" style="font-size:16px" textLength="126" lengthAdjust="spacingAndGlyphs">Electron Energy</text>
<text transform="translate(92,497) rotate(-90)" class="s13" textLength="17" lengthAdjust="spacingAndGlyphs">eV</text>
<g class="s15">
<text transform="translate(820,438) rotate(90)" textLength="100" lengthAdjust="spacingAndGlyphs">Sensor Data</text>
<text transform="translate(804,418) rotate(90)" textLength="140" lengthAdjust="spacingAndGlyphs">MEx Alt/Mars/Pd</text>
<text transform="translate(788,455) rotate(90)" textLength="67" lengthAdjust="spacingAndGlyphs">Distance</text>
<text transform="translate(772,477) rotate(90)" textLength="23" lengthAdjust="spacingAndGlyphs">km</text>
</g>

<!-- bottom colorbar -->
<rect x="860.500" y="402.500" width="20" height="170" fill="url(#cb)" stroke="#fff"/>
<path class="ax" stroke-width="1" d="M875 405H880M875 408H880M875 411H880M875 414H880M876 418H880M876 424H880M875 436H880M875 438H880M875 441H880M875 444H880M875 448H880M876 452H880M876 458H880M875 470H880M875 472H880M875 475H880M875 478H880M875 482H880M876 486H880M876 492H880M875 504H880M875 506H880M875 509H880M875 512H880M875 516H880M876 520H880M876 526H880M875 538H880M875 540H880M875 543H880M875 546H880M875 550H880M876 554H880M876 560H880"/>
<g class="s10">
<text x="886" y="406" textLength="9" lengthAdjust="spacingAndGlyphs">10</text><text x="895.500" y="403" class="s7">7</text>
<text x="886" y="439" textLength="9" lengthAdjust="spacingAndGlyphs">10</text><text x="895.500" y="436" class="s7">6</text>
<text x="886" y="473" textLength="9" lengthAdjust="spacingAndGlyphs">10</text><text x="895.500" y="470" class="s7">5</text>
<text x="886" y="507" textLength="9" lengthAdjust="spacingAndGlyphs">10</text><text x="895.500" y="504" class="s7">4</text>
<text x="886" y="541" textLength="9" lengthAdjust="spacingAndGlyphs">10</text><text x="895.500" y="538" class="s7">3</text>
<text x="886" y="575" textLength="9" lengthAdjust="spacingAndGlyphs">10</text><text x="895.500" y="572" class="s7">2</text>
</g>
<text transform="translate(918,420) rotate(90)" class="s10" textLength="133" lengthAdjust="spacingAndGlyphs">cnts/(cm**2-sr-sec-eV)</text>

<!-- rows under panel 4 -->
<g class="s11">
<text x="65" y="595" textLength="48" lengthAdjust="spacingAndGlyphs">2005/111</text>
<text x="57" y="608.300" textLength="56" lengthAdjust="spacingAndGlyphs">SZA (deg)</text>
<text x="45" y="622.300" textLength="68" lengthAdjust="spacingAndGlyphs">SolLat (deg)</text>
<text x="75" y="636" textLength="38" lengthAdjust="spacingAndGlyphs">LT (hr)</text>
<text x="45" y="649.700" textLength="68" lengthAdjust="spacingAndGlyphs">PdLon (deg)</text>
</g>
<g class="s11 m">
<text x="142" y="595">20:32</text><text x="237" y="595">21:12</text><text x="331" y="595">21:52</text><text x="426" y="595">22:32</text><text x="520" y="595">23:12</text><text x="614" y="595">23:52</text>
<text x="142" y="608.300">86.71</text><text x="237" y="608.300">99.38</text><text x="331" y="608.300">119.41</text><text x="426" y="608.300">125.31</text><text x="520" y="608.300">49.28</text><text x="614" y="608.300">44.82</text>
<text x="142" y="622.300">-57.07</text><text x="237" y="622.300">-44.33</text><text x="331" y="622.300">-18.91</text><text x="426" y="622.300">54.21</text><text x="520" y="622.300">-0.48</text><text x="614" y="622.300">-34.47</text>
<text x="142" y="636">17.60</text><text x="237" y="636">18.88</text><text x="331" y="636">20.08</text><text x="426" y="636">23.43</text><text x="520" y="636">8.71</text><text x="614" y="636">9.96</text>
<text x="142" y="649.700">234.23</text><text x="237" y="649.700">238.50</text><text x="331" y="649.700">233.27</text><text x="426" y="649.700">229.94</text><text x="520" y="649.700">35.29</text><text x="614" y="649.700">27.93</text>
</g>
</svg>
</body></html>
